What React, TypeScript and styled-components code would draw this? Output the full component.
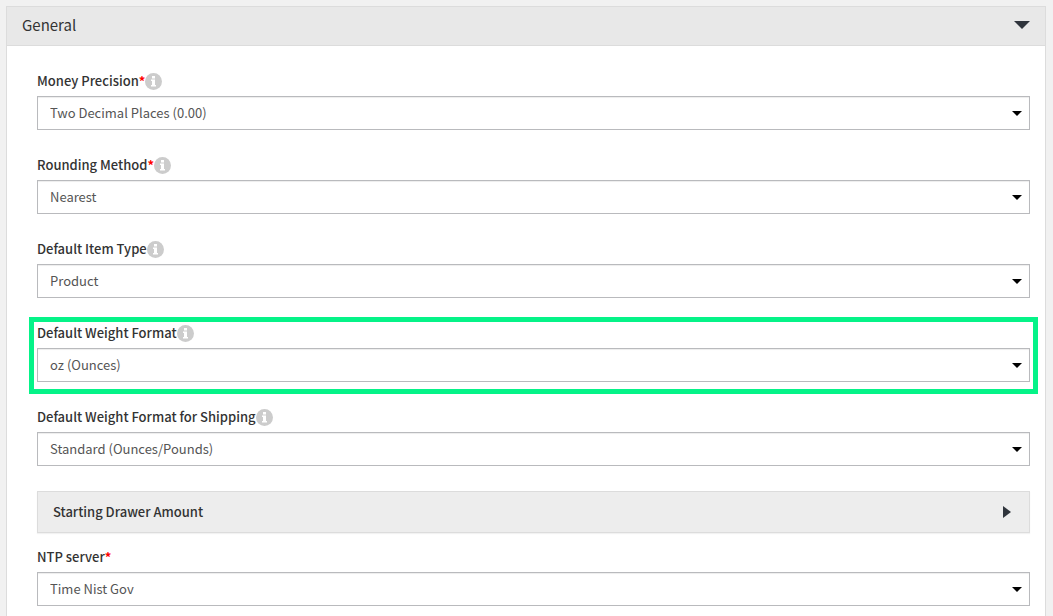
import React, { useId, useState } from "react";
import styled, { createGlobalStyle, css } from "styled-components";

const GlobalStyle = createGlobalStyle`
  *, *::before, *::after { box-sizing: border-box; }
  body {
    margin: 0;
    background: #f1f1f1;
    color: #333;
    font-family: "Noto Sans CJK SC", "Noto Sans", sans-serif;
    font-size: 13px;
    line-height: 20px;
  }
`;

const Page = styled.main`
  min-height: 100vh;
  padding: 6px 7px 0 6px;
  display: flex;
  flex-direction: column;
`;

const Panel = styled.section`
  flex: 1;
  background: #fff;
  border: 1px solid #dcdcdc;
  border-bottom: 0;
`;

const PanelHeading = styled.h2`
  margin: 0;
  font-size: 15px;
  font-weight: 400;
`;

const PanelToggle = styled.button`
  width: 100%;
  height: 39px;
  padding: 0 15px 2px;
  display: flex;
  align-items: center;
  justify-content: space-between;
  border: 0;
  border-bottom: 1px solid #dcdcdc;
  background: #e8e8e8;
  color: #333;
  font: inherit;
  cursor: pointer;
`;

const PanelBody = styled.div`
  padding: 25px 15px 10px 30px;
`;

const FieldBox = styled.div<{ $highlighted?: boolean }>`
  position: relative;
  margin-bottom: 25px;

  &:last-child { margin-bottom: 0; }

  ${({ $highlighted }) =>
    $highlighted &&
    css`
      &::after {
        content: "";
        position: absolute;
        inset: -6px -8px -12px;
        border: 5px solid #05f388;
        pointer-events: none;
      }
    `}
`;

const LabelRow = styled.div`
  display: flex;
  align-items: center;
  height: 20px;
  margin-bottom: 5px;
`;

const Label = styled.label`
  font-weight: 500;
`;

const Required = styled.span`
  color: #f00;
  font-weight: 700;
`;

const InfoButton = styled.button`
  display: flex;
  padding: 0;
  border: 0;
  background: none;
  cursor: help;
`;

const SelectWrap = styled.div`
  display: grid;
  align-items: center;

  > * { grid-area: 1 / 1; }
  > svg {
    justify-self: end;
    margin-right: 8px;
    pointer-events: none;
  }
`;

const Select = styled.select`
  appearance: none;
  width: 100%;
  height: 34px;
  padding: 0 30px 0 12px;
  border: 1px solid #b9babd;
  border-radius: 0;
  background: #fff;
  box-shadow: inset 0 1px 1px rgba(0, 0, 0, 0.075);
  color: #555;
  font: inherit;
`;

const SubHeading = styled.h3`
  margin: 0 0 14px;
  font-size: 13px;
  font-weight: 500;
`;

const SubToggle = styled.button`
  width: 100%;
  height: 42px;
  padding: 0 18px 0 15px;
  display: flex;
  align-items: center;
  justify-content: space-between;
  border: 1px solid #dcdcdc;
  background: #ededed;
  box-shadow: 0 1px 1px rgba(0, 0, 0, 0.05);
  color: #333;
  font: inherit;
  cursor: pointer;
`;

const InfoIcon = () => (
  <svg width="17" height="17" viewBox="0 0 17 17" aria-hidden="true">
    <circle cx="8.5" cy="8.5" r="8.5" fill="#ccc" />
    <path d="M7 3h3v2.500H7zM6 6.500h4v5.500h1v1.500H6V12h1V8H6z" fill="#fff" />
  </svg>
);

type FieldProps = {
  label: string;
  value: string;
  required?: boolean;
  info?: boolean;
  highlighted?: boolean;
};

function Field({ label, value, required, info = true, highlighted }: FieldProps) {
  const id = useId();
  return (
    <FieldBox $highlighted={highlighted}>
      <LabelRow>
        <Label htmlFor={id}>
          {label}
          {required && <Required>*</Required>}
        </Label>
        {info && (
          <InfoButton type="button" aria-label={`About ${label}`}>
            <InfoIcon />
          </InfoButton>
        )}
      </LabelRow>
      <SelectWrap>
        <Select id={id} defaultValue={value}>
          <option>{value}</option>
        </Select>
        <svg width="10" height="5" viewBox="0 0 10 5" aria-hidden="true">
          <path d="M0 0h10L5 5z" fill="#000" />
        </svg>
      </SelectWrap>
    </FieldBox>
  );
}

export default function App() {
  const [open, setOpen] = useState(true);
  return (
    <>
      <GlobalStyle />
      <Page>
        <Panel>
          <PanelHeading>
            <PanelToggle type="button" aria-expanded={open} onClick={() => setOpen(!open)}>
              General
              <svg width="16" height="8" viewBox="0 0 16 8" aria-hidden="true">
                <path d="M0 0h16L8 8z" fill="#2f343c" />
              </svg>
            </PanelToggle>
          </PanelHeading>
          {open && (
            <PanelBody>
              <Field label="Money Precision" value="Two Decimal Places (0.00)" required />
              <Field label="Rounding Method" value="Nearest" required />
              <Field label="Default Item Type" value="Product" />
              <Field label="Default Weight Format" value="oz (Ounces)" highlighted />
              <Field label="Default Weight Format for Shipping" value="Standard (Ounces/Pounds)" />
              <SubHeading>
                <SubToggle type="button" aria-expanded={false}>
                  Starting Drawer Amount
                  <svg width="8" height="12" viewBox="0 0 8 12" aria-hidden="true">
                    <path d="M0 0v12L8 6z" fill="#2f343c" />
                  </svg>
                </SubToggle>
              </SubHeading>
              <Field label="NTP server" value="Time Nist Gov" required info={false} />
            </PanelBody>
          )}
        </Panel>
      </Page>
    </>
  );
}
